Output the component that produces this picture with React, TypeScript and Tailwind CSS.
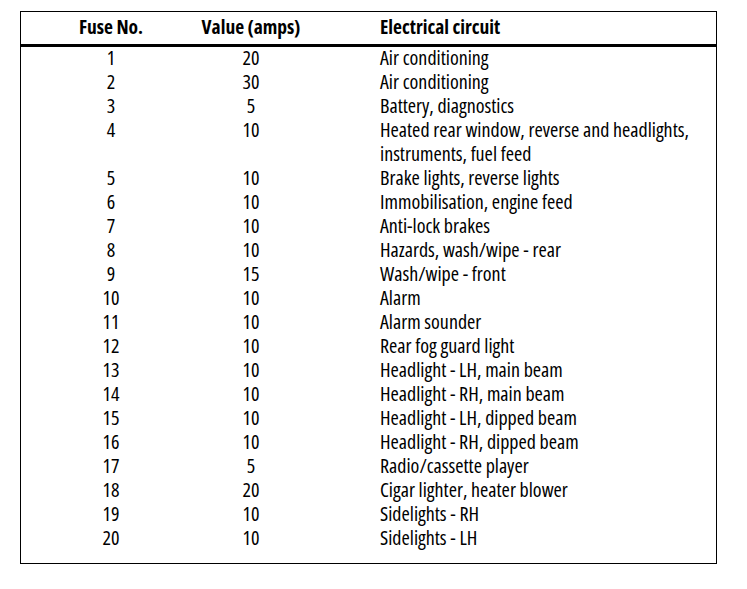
import React from 'react'

interface Fuse {
  no: number
  amps: number
  circuit: string[]
}

const fuses: Fuse[] = [
  { no: 1, amps: 20, circuit: ['Air conditioning'] },
  { no: 2, amps: 30, circuit: ['Air conditioning'] },
  { no: 3, amps: 5, circuit: ['Battery, diagnostics'] },
  { no: 4, amps: 10, circuit: ['Heated rear window, reverse and headlights,', 'instruments, fuel feed'] },
  { no: 5, amps: 10, circuit: ['Brake lights, reverse lights'] },
  { no: 6, amps: 10, circuit: ['Immobilisation, engine feed'] },
  { no: 7, amps: 10, circuit: ['Anti-lock brakes'] },
  { no: 8, amps: 10, circuit: ['Hazards, wash/wipe - rear'] },
  { no: 9, amps: 15, circuit: ['Wash/wipe - front'] },
  { no: 10, amps: 10, circuit: ['Alarm'] },
  { no: 11, amps: 10, circuit: ['Alarm sounder'] },
  { no: 12, amps: 10, circuit: ['Rear fog guard light'] },
  { no: 13, amps: 10, circuit: ['Headlight - LH, main beam'] },
  { no: 14, amps: 10, circuit: ['Headlight - RH, main beam'] },
  { no: 15, amps: 10, circuit: ['Headlight - LH, dipped beam'] },
  { no: 16, amps: 10, circuit: ['Headlight - RH, dipped beam'] },
  { no: 17, amps: 5, circuit: ['Radio/cassette player'] },
  { no: 18, amps: 20, circuit: ['Cigar lighter, heater blower'] },
  { no: 19, amps: 10, circuit: ['Sidelights - RH'] },
  { no: 20, amps: 10, circuit: ['Sidelights - LH'] },
]

export default function App() {
  return (
    <div className="w-[747px] h-[589px] bg-white pt-[11px] pl-[20px] text-black font-['Open_Sans',sans-serif] font-stretch-condensed">
      <div className="w-[697px] h-[553px] border border-black">
        {/* header */}
        <div className="grid grid-cols-[180px_100px_1fr] h-[35px] pb-[3px] items-center border-b-[3px] border-black text-[19.5px] font-bold">
          <div className="text-center">Fuse No.</div>
          <div className="text-center whitespace-nowrap">Value (amps)</div>
          <div className="pl-[79px]">Electrical circuit</div>
        </div>

        {/* rows */}
        <div className="-mt-[1px] text-[20px] leading-[24px]">
          {fuses.map((f) => (
            <div key={f.no} className="grid grid-cols-[180px_100px_1fr]">
              <div className="text-center">{f.no}</div>
              <div className="text-center">{f.amps}</div>
              <div className="pl-[79px]">
                {f.circuit.map((line) => (
                  <div key={line} className="whitespace-nowrap">{line}</div>
                ))}
              </div>
            </div>
          ))}
        </div>
      </div>
    </div>
  )
}
